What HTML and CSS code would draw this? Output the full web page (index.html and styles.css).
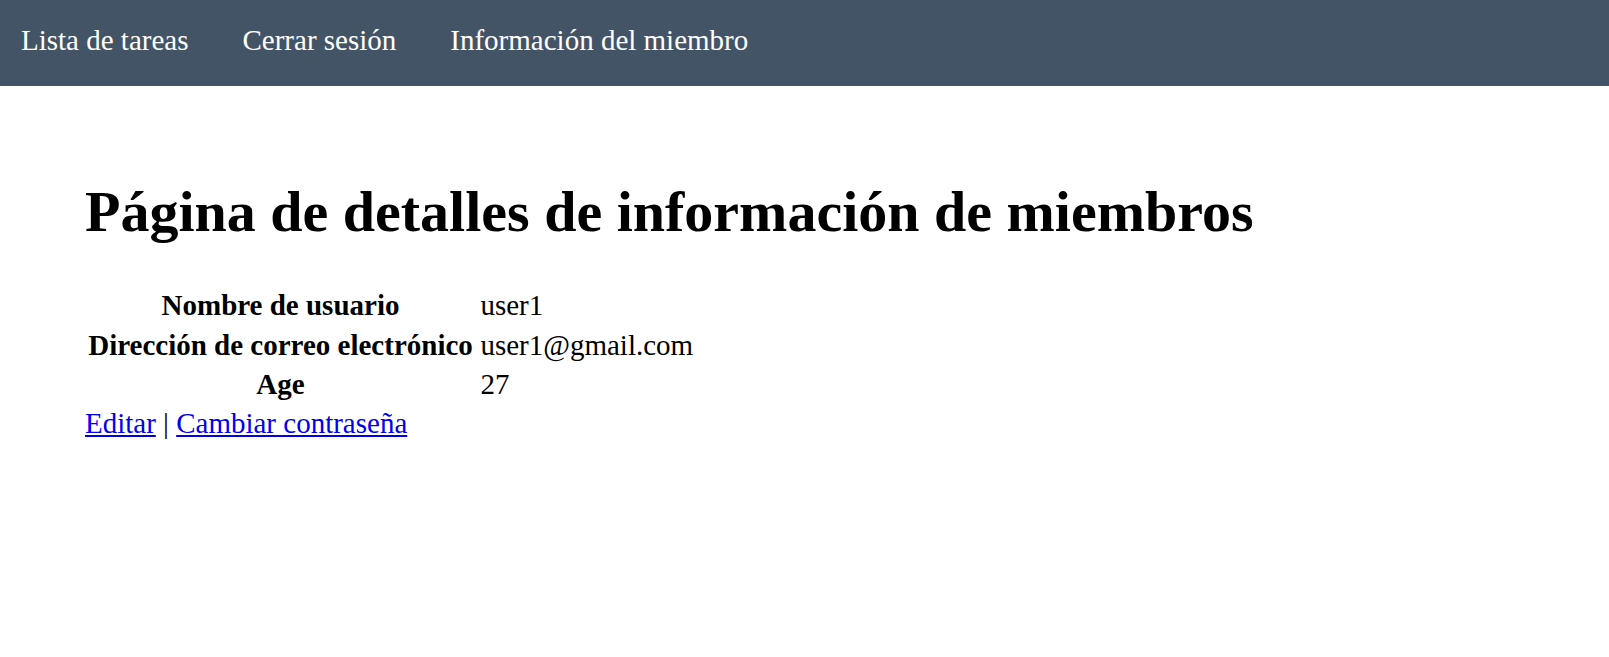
FILE: index.html
```html
<!DOCTYPE html>
<html lang="es">
<head>
<meta charset="utf-8">
<title>Información del miembro</title>
<link rel="stylesheet" href="styles.css">
</head>
<body>
<nav class="navbar">
  <a class="nav-link" href="#">Lista de tareas</a>
  <a class="nav-link" href="#">Cerrar sesión</a>
  <a class="nav-link" href="#">Información del miembro</a>
</nav>
<main class="content">
  <h1 class="title">Página de detalles de información de miembros</h1>
  <table class="details">
    <tr><th>Nombre de usuario</th><td>user1</td></tr>
    <tr><th>Dirección de correo electrónico</th><td>user1@gmail.com</td></tr>
    <tr><th>Age</th><td>27</td></tr>
  </table>
  <div class="actions"><a href="#">Editar</a> | <a href="#">Cambiar contraseña</a></div>
</main>
</body>
</html>
```

FILE: styles.css
```css
html, body {
  margin: 0;
  padding: 0;
  background: #ffffff;
  font-family: "Liberation Serif", "Times New Roman", serif;
  color: #000;
}
.navbar {
  display: flex;
  align-items: center;
  gap: 54px;
  height: 86px;
  padding: 0 21px 6px;
  background: #435466;
  box-sizing: border-box;
}
.nav-link {
  color: #ffffff;
  text-decoration: none;
  font-size: 29px;
}
.content {
  padding: 92px 85px 0;
  font-size: 29px;
}
.title {
  font-size: 58px;
  font-weight: bold;
  margin: 0 0 40px;
}
.details {
  border-spacing: 2.4px;
}
.details th, .details td {
  padding: 2.2px 2.2px 2.2px 1.2px;
  font-size: 29px;
}
.details th {
  text-align: center;
}
.details td {
  text-align: left;
  padding-left: 3.4px;
}
.actions {
  line-height: 36px;
}
.actions a {
  color: #0000ee;
}
```
